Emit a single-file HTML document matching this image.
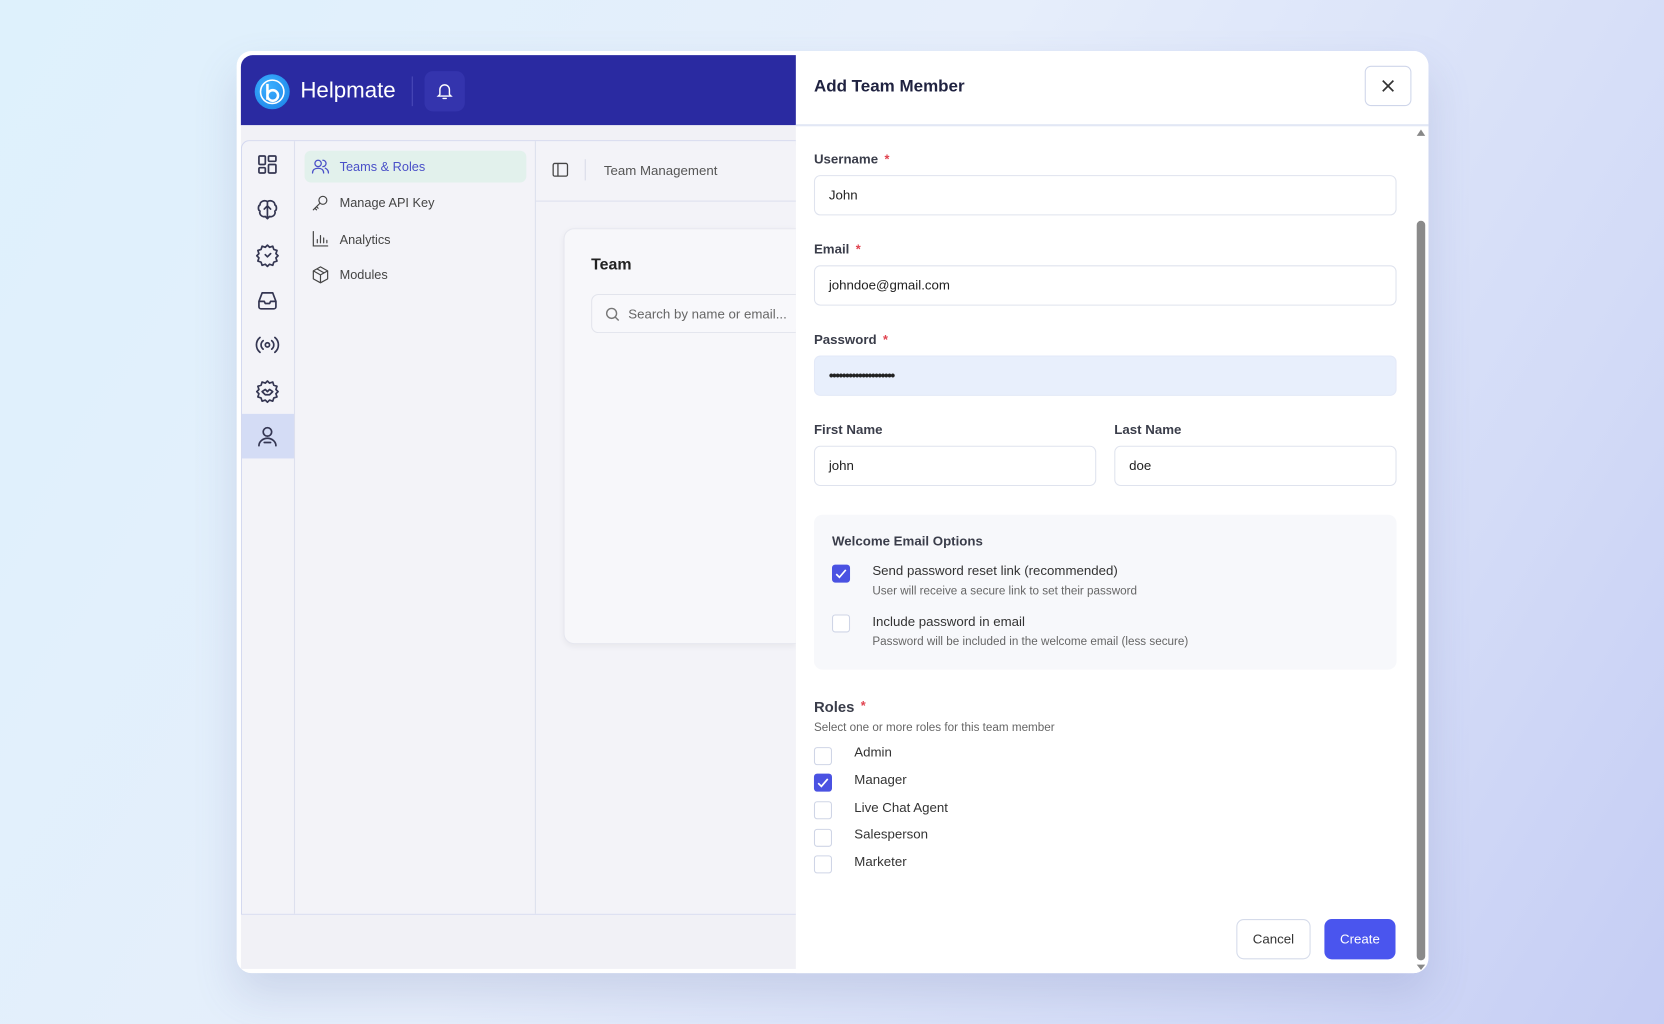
<!DOCTYPE html>
<html><head><meta charset="utf-8"><style>
*{box-sizing:border-box;margin:0;padding:0}
html,body{width:1664px;height:1024px;overflow:hidden}
body{background:linear-gradient(120deg,#def1fc 0%,#e6eefb 45%,#d3dbf7 80%,#c5cdf4 100%);font-family:"Liberation Sans",sans-serif}
#s{position:absolute;left:0;top:0;width:1568px;height:965px;transform:scale(1.06122);transform-origin:0 0}
.a{position:absolute}
.win{left:223px;top:48px;width:1123px;height:869px;background:#fff;border-radius:14px;box-shadow:0 20px 40px rgba(90,100,160,.18)}
.hdr{left:227px;top:52px;width:523px;height:66px;background:#2a2aa1;border-radius:11px 0 0 0}
.body{left:227px;top:118px;width:523px;height:795px;background:#f1f1f6}
.panel{left:227px;top:132px;width:523px;height:730px;border:1px solid #d3d8ef;border-right:none;border-radius:8px 0 0 0;background:#f3f3f8}
.ico{stroke:#343652;fill:none;stroke-width:1.6;stroke-linecap:round;stroke-linejoin:round}
.lab{font-size:12.5px;font-weight:bold;color:#3a3d4a}
.st{color:#e0434f;margin-left:6px;font-size:12px;vertical-align:top}
.inp{height:38px;border:1px solid #dfe3ee;border-radius:6px;font-size:12.5px;color:#222;padding:11px 13px;background:#fff}
.cb{width:17px;height:17px;border:1px solid #cfd5e6;border-radius:3px;background:#fff}
.cbc{background:#4a52e2;border-color:#4a52e2}
.t13{font-size:12.5px;color:#333}
</style></head><body><div id="s">
<div class="a win"></div>
<div class="a hdr"></div>
<div class="a" style="left:240px;top:70px;width:33px;height:33px;border-radius:50%;background:radial-gradient(circle at 40% 35%,#3cb0ff,#1a7fe6)"></div>
<svg class="a" style="left:240px;top:70px" width="33" height="33" viewBox="0 0 33 33"><path d="M12 9v15M12 20a5 5 0 1 0 5-5 5 5 0 0 0-5 5" stroke="#fff" stroke-width="2.4" fill="none"/><circle cx="16.5" cy="16.5" r="11" stroke="#fff" stroke-width="1.5" fill="none"/></svg>
<div class="a" style="left:283px;top:74px;font-size:21px;color:#fff">Helpmate</div>
<div class="a" style="left:388px;top:72px;width:1px;height:28px;background:#4a4ab8"></div>
<div class="a" style="left:400px;top:67px;width:38px;height:38px;border-radius:8px;background:#3434ad"></div>
<svg class="a" style="left:410px;top:77px" width="18" height="18" viewBox="0 0 24 24" fill="none" stroke="#fff" stroke-width="1.8" stroke-linecap="round"><path d="M6 16V10a6 6 0 0 1 12 0v6l2 2H4zM10 21h4"/></svg>
<div class="a body"></div>
<div class="a panel"></div>
<div class="a" style="left:277px;top:133px;width:1px;height:728px;background:#dde0ee"></div>
<div class="a" style="left:504px;top:133px;width:1px;height:728px;background:#dde0ee"></div>
<div class="a" style="left:228px;top:390px;width:49px;height:42px;background:#d4dcf5"></div>
<svg class="a" style="left:240px;top:143px" width="24" height="282" viewBox="0 0 24 282">
<g class="ico"><rect x="4" y="4" width="6" height="8" rx="1"/><rect x="13" y="4" width="7" height="5" rx="1"/><rect x="4" y="15" width="6" height="5" rx="1"/><rect x="13" y="12" width="7" height="8" rx="1"/></g>
<g class="ico" transform="translate(0,43)"><path d="M12 4c-3-2-7 0-7 3-2 1-2 5 0 6-1 3 2 6 5 5 1 1 2 2 2 2s1-1 2-2c3 1 6-2 5-5 2-1 2-5 0-6 0-3-4-5-7-3zM12 4v16M9 11l3-3 3 3"/></g>
<g class="ico" transform="translate(0,85)"><path d="M12 3l2 2 3-1 1 3 3 1-1 3 2 2-2 2 1 3-3 1-1 3-3-1-2 2-2-2-3 1-1-3-3-1 1-3-2-2 2-2-1-3 3-1 1-3 3 1z"/><path d="M10 12l2 2 3-3"/></g>
<g class="ico" transform="translate(0,128)"><path d="M4 13l3-8h10l3 8v5a2 2 0 0 1-2 2H6a2 2 0 0 1-2-2zM4 13h5l1 2h4l1-2h5"/></g>
<g class="ico" transform="translate(0,170)"><circle cx="12" cy="12" r="2"/><path d="M8 8a5 5 0 0 0 0 8M16 8a5 5 0 0 1 0 8M5 5a9 9 0 0 0 0 14M19 5a9 9 0 0 1 0 14"/></g>
<g class="ico" transform="translate(0,213)"><path d="M12 3l2 2 3-1 1 3 3 1-1 3 2 2-2 2 1 3-3 1-1 3-3-1-2 2-2-2-3 1-1-3-3-1 1-3-2-2 2-2-1-3 3-1 1-3 3 1z"/><path d="M7 13l3-2 2 2 2-2 3 2-3 3h-4z"/></g>
<g class="ico" transform="translate(0,256)"><circle cx="12" cy="8" r="4"/><path d="M4 21c0-4 4-7 8-7s8 3 8 7M9 18h6"/></g>
</svg>
<div class="a" style="left:287px;top:142px;width:209px;height:30px;border-radius:6px;background:#e2f1ec"></div>
<svg class="a" style="left:293px;top:148px" width="18" height="18" viewBox="0 0 24 24" fill="none" stroke="#4a50c8" stroke-width="1.6" stroke-linecap="round"><circle cx="9" cy="8" r="4"/><path d="M2 20c0-4 3-6 7-6s7 2 7 6M15 4a4 4 0 0 1 0 8M18 14c2 1 4 3 4 6"/></svg>
<div class="a" style="left:320px;top:150px;font-size:12px;color:#4a50c8">Teams &amp; Roles</div>
<svg class="a" style="left:293px;top:182px" width="18" height="18" viewBox="0 0 24 24" fill="none" stroke="#444" stroke-width="1.5" stroke-linecap="round"><circle cx="15" cy="9" r="5"/><path d="M11 13l-8 8M5 19l2 2M7 17l2 2"/></svg>
<div class="a" style="left:320px;top:184px;font-size:12px;color:#444">Manage API Key</div>
<svg class="a" style="left:293px;top:216px" width="18" height="18" viewBox="0 0 24 24" fill="none" stroke="#444" stroke-width="1.5" stroke-linecap="round"><path d="M3 3v18h18M8 17v-4M12 17V8M16 17v-6M20 17v-3"/></svg>
<div class="a" style="left:320px;top:219px;font-size:12px;color:#444">Analytics</div>
<svg class="a" style="left:293px;top:250px" width="18" height="18" viewBox="0 0 24 24" fill="none" stroke="#444" stroke-width="1.5" stroke-linejoin="round"><path d="M12 2l9 5v10l-9 5-9-5V7zM3 7l9 5 9-5M12 12v10M7.5 4.5l9 5"/></svg>
<div class="a" style="left:320px;top:252px;font-size:12px;color:#444">Modules</div>
<div class="a" style="left:505px;top:189px;width:245px;height:1px;background:#dde0ee"></div>
<svg class="a" style="left:519px;top:151px" width="18" height="18" viewBox="0 0 24 24" fill="none" stroke="#444" stroke-width="1.6"><rect x="3" y="4" width="18" height="16" rx="2"/><path d="M9 4v16"/></svg>
<div class="a" style="left:551px;top:150px;width:1px;height:20px;background:#d8dbe8"></div>
<div class="a" style="left:569px;top:154px;font-size:12.5px;color:#555">Team Management</div>
<div class="a" style="left:531px;top:215px;width:219px;height:392px;background:#f7f7fa;border:1px solid #e6e7ef;border-right:none;border-radius:10px 0 0 10px;box-shadow:0 2px 6px rgba(0,0,0,.05)"></div>
<div class="a" style="left:557px;top:241px;font-size:15px;font-weight:bold;color:#222">Team</div>
<div class="a" style="left:557px;top:277px;width:193px;height:37px;border:1px solid #e2e4ec;border-right:none;border-radius:7px 0 0 7px;background:#f8f8fb"></div>
<svg class="a" style="left:569px;top:288px" width="16" height="16" viewBox="0 0 24 24" fill="none" stroke="#777" stroke-width="2"><circle cx="11" cy="11" r="7"/><path d="M16 16l5 5"/></svg>
<div class="a" style="left:592px;top:289px;font-size:12.5px;color:#666">Search by name or email...</div>
<div class="a" style="left:750px;top:48px;width:596px;height:869px;background:#fff;border-radius:0 14px 14px 0"></div>
<div class="a" style="left:767px;top:73px;font-size:16px;font-weight:bold;color:#1f2240">Add Team Member</div>
<div class="a" style="left:1286px;top:62px;width:44px;height:38px;border:1px solid #cfd6ea;border-radius:6px"></div>
<svg class="a" style="left:1300px;top:73px" width="16" height="16" viewBox="0 0 16 16" stroke="#333" stroke-width="1.6"><path d="M3 3l10 10M13 3L3 13"/></svg>
<div class="a" style="left:750px;top:117px;width:596px;height:2px;background:#e2e7f5"></div>
<div class="a" style="left:1335px;top:122px;width:0;height:0;border:4px solid transparent;border-bottom:6px solid #888;border-top:none"></div>
<div class="a" style="left:1335px;top:208px;width:8px;height:697px;background:#8a8a8a;border-radius:4px"></div>
<div class="a" style="left:1335px;top:909px;width:0;height:0;border:4px solid transparent;border-top:5px solid #888;border-bottom:none"></div>
<div class="a lab" style="left:767px;top:143px">Username<span class="st">*</span></div>
<div class="a inp" style="left:767px;top:165px;width:549px">John</div>
<div class="a lab" style="left:767px;top:228px">Email<span class="st">*</span></div>
<div class="a inp" style="left:767px;top:250px;width:549px">johndoe@gmail.com</div>
<div class="a lab" style="left:767px;top:313px">Password<span class="st">*</span></div>
<div class="a inp" style="left:767px;top:335px;width:549px;background:#e8effc;border-color:#e3e9f8;font-size:13px;letter-spacing:-1.5px;padding-top:10px;font-weight:bold">••••••••••••••••••••</div>
<div class="a lab" style="left:767px;top:398px">First Name</div>
<div class="a inp" style="left:767px;top:420px;width:266px">john</div>
<div class="a lab" style="left:1050px;top:398px">Last Name</div>
<div class="a inp" style="left:1050px;top:420px;width:266px">doe</div>
<div class="a" style="left:767px;top:485px;width:549px;height:146px;background:#f7f8fb;border-radius:8px"></div>
<div class="a lab" style="left:784px;top:503px">Welcome Email Options</div>
<div class="a cb cbc" style="left:784px;top:532px"></div>
<svg class="a" style="left:784px;top:532px" width="17" height="17" viewBox="0 0 17 17" fill="none" stroke="#fff" stroke-width="1.6"><path d="M4 9l3 3 6-7"/></svg>
<div class="a t13" style="left:822px;top:531px">Send password reset link (recommended)</div>
<div class="a" style="left:822px;top:551px;font-size:11px;color:#666">User will receive a secure link to set their password</div>
<div class="a cb" style="left:784px;top:579px"></div>
<div class="a t13" style="left:822px;top:579px">Include password in email</div>
<div class="a" style="left:822px;top:599px;font-size:11px;color:#666">Password will be included in the welcome email (less secure)</div>
<div class="a" style="left:767px;top:658px;font-size:14px;font-weight:bold;color:#3a3d4a">Roles<span class="st">*</span></div>
<div class="a" style="left:767px;top:680px;font-size:11px;color:#666">Select one or more roles for this team member</div>
<div class="a cb" style="left:767px;top:704px"></div><div class="a t13" style="left:805px;top:702px">Admin</div>
<div class="a cb cbc" style="left:767px;top:729px"></div>
<svg class="a" style="left:767px;top:729px" width="17" height="17" viewBox="0 0 17 17" fill="none" stroke="#fff" stroke-width="1.6"><path d="M4 9l3 3 6-7"/></svg>
<div class="a t13" style="left:805px;top:728px">Manager</div>
<div class="a cb" style="left:767px;top:755px"></div><div class="a t13" style="left:805px;top:754px">Live Chat Agent</div>
<div class="a cb" style="left:767px;top:781px"></div><div class="a t13" style="left:805px;top:779px">Salesperson</div>
<div class="a cb" style="left:767px;top:806px"></div><div class="a t13" style="left:805px;top:805px">Marketer</div>
<div class="a" style="left:1165px;top:866px;width:70px;height:38px;border:1px solid #d5dbea;border-radius:7px;font-size:12.5px;color:#333;text-align:center;line-height:36px">Cancel</div>
<div class="a" style="left:1248px;top:866px;width:67px;height:38px;background:#4a55ee;border-radius:7px;font-size:12.5px;color:#fff;text-align:center;line-height:38px">Create</div>
</div></body></html>
